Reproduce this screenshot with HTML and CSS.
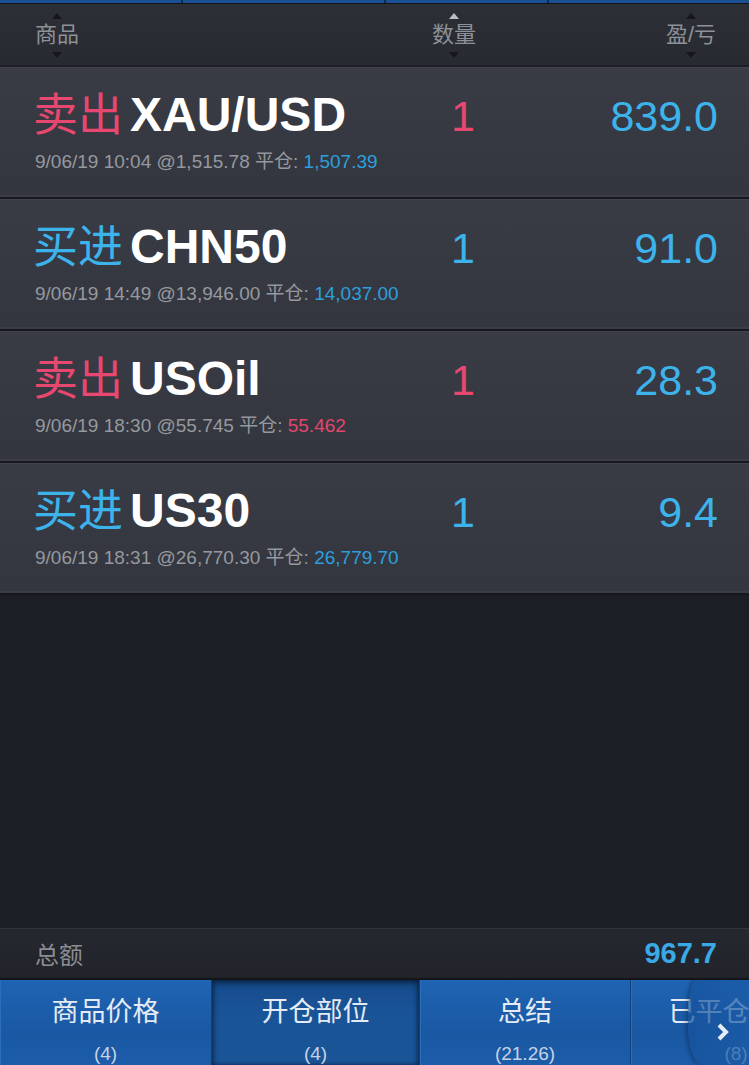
FILE: index.html
```html
<!DOCTYPE html>
<html>
<head>
	<meta charset="utf-8" />
	<title>开仓部位</title>
	<link rel="stylesheet" href="styles.css">
</head>
<body>
	<div class="app">
		<div class="topstrip">
			<span class="seg"></span><span class="seg"></span><span class="seg"></span><span class="seg"></span>
		</div>

		<div class="thead">
			<div class="hcell hleft">
				<i class="up"></i><span>商品</span><i class="down"></i>
			</div>
			<div class="hcell">
				<i class="up on"></i><span>数量</span><i class="down"></i>
			</div>
			<div class="hcell hright">
				<i class="up"></i><span>盈/亏</span><i class="down"></i>
			</div>
		</div>

		<div class="rows">
			<div class="row">
				<div class="sym">
					<div class="main"><span class="side sell">卖出</span><span class="code">XAU/USD</span></div>
					<div class="sub">9/06/19 10:04 @1,515.78 平仓: <span class="blue">1,507.39</span></div>
				</div>
				<div class="qty sell">1</div>
				<div class="pl">839.0</div>
			</div>
			<div class="row">
				<div class="sym">
					<div class="main"><span class="side buy">买进</span><span class="code">CHN50</span></div>
					<div class="sub">9/06/19 14:49 @13,946.00 平仓: <span class="blue">14,037.00</span></div>
				</div>
				<div class="qty buy">1</div>
				<div class="pl">91.0</div>
			</div>
			<div class="row">
				<div class="sym">
					<div class="main"><span class="side sell">卖出</span><span class="code">USOil</span></div>
					<div class="sub">9/06/19 18:30 @55.745 平仓: <span class="red">55.462</span></div>
				</div>
				<div class="qty sell">1</div>
				<div class="pl">28.3</div>
			</div>
			<div class="row">
				<div class="sym">
					<div class="main"><span class="side buy">买进</span><span class="code">US30</span></div>
					<div class="sub">9/06/19 18:31 @26,770.30 平仓: <span class="blue">26,779.70</span></div>
				</div>
				<div class="qty buy">1</div>
				<div class="pl">9.4</div>
			</div>
		</div>

		<div class="spacer"></div>

		<div class="total">
			<span class="total-label">总额</span>
			<span class="total-value">967.7</span>
		</div>

		<div class="tabs">
			<div class="tab t1"><div class="tab-name">商品价格</div><div class="tab-count">(4)</div></div>
			<div class="tab t2 active"><div class="tab-name">开仓部位</div><div class="tab-count">(4)</div></div>
			<div class="tab t3"><div class="tab-name">总结</div><div class="tab-count">(21.26)</div></div>
			<div class="tab t4"><div class="tab-name">已平仓部位</div><div class="tab-count">(8)</div></div>
			<div class="more">
				<svg width="14" height="20" viewBox="0 0 14 20"><path d="M3 3 L10 10 L3 17" fill="none" stroke="#e6edf6" stroke-width="4" stroke-linejoin="miter"/></svg>
			</div>
		</div>
	</div>
</body>
</html>
```

FILE: styles.css
```css
body{
	margin: 0;
	background-color: #1b1e25;
	font-family: "Liberation Sans", "Noto Sans CJK SC", sans-serif;
}

.app{
	width: 749px;
	height: 1065px;
	display: flex;
	flex-direction: column;
	overflow: hidden;
}

/* bottom edge of the bar above */
.topstrip{
	height: 3px;
	display: flex;
	background-color: #0d2a55;
	border-bottom: 1px solid #121419;
}
.topstrip .seg{
	height: 3px;
	background: #1a4f94;
	margin-right: 2px;
}
.topstrip .seg:nth-child(1){ width: 181px; }
.topstrip .seg:nth-child(2){ width: 201px; }
.topstrip .seg:nth-child(3){ width: 161px; }
.topstrip .seg:nth-child(4){ flex: 1; margin-right: 0; }

/* column header */
.thead{
	height: 61px;
	display: grid;
	grid-template-columns: 362px 114px 1fr;
	padding: 0 33px 0 35px;
	background: linear-gradient(#2c2f36, #282a31);
	border-bottom: 2px solid #1d1f25;
}
.hcell{
	display: flex;
	flex-direction: column;
	align-items: center;
	justify-self: center;
	padding-top: 9px;
	color: #8e9198;
	font-size: 22px;
	line-height: 26px;
}
.hleft{ justify-self: start; }
.hright{ justify-self: end; }
.hcell .up, .hcell .down{
	width: 0;
	height: 0;
	border-left: 5px solid transparent;
	border-right: 5px solid transparent;
}
.hcell .up{
	border-bottom: 6px solid #15171b;
	margin-bottom: 3px;
}
.hcell .up.on{
	border-bottom-color: #b9bcc2;
}
.hcell .down{
	border-top: 6px solid #15171b;
	margin-top: 4px;
}

/* position rows */
.row{
	height: 130px;
	display: grid;
	grid-template-columns: 388px 80px 1fr;
	align-items: start;
	padding: 0 31px 0 35px;
	background: linear-gradient(#393c45, #33363e);
	box-shadow: inset 0 1px 0 #41444d, inset 0 -2px 0 #3a3d46;
	border-bottom: 2px solid #16181d;
}
.sym{
	padding-top: 25px;
}
.main{
	line-height: 46px;
	white-space: nowrap;
}
.side{
	font-size: 45px;
	margin-left: -2px;
}
.sell{ color: #e8476f; }
.buy{ color: #3db3ec; }
.code{
	font-size: 48px;
	font-weight: bold;
	color: #ffffff;
	margin-left: 7px;
}
.sub{
	margin-top: 2px;
	font-size: 19px;
	line-height: 22px;
	color: #96999f;
	white-space: nowrap;
}
.sub .blue{ color: #2d9fdc; }
.sub .red{ color: #e3466c; }

.qty, .pl{
	padding-top: 28px;
	font-size: 43px;
	line-height: 43px;
}
.qty{ text-align: center; }
.pl{
	text-align: right;
	color: #3db3ec;
}

.spacer{
	flex: 1;
	background-color: #1b1e25;
}

/* total bar */
.total{
	height: 49px;
	display: flex;
	align-items: center;
	justify-content: space-between;
	padding: 0 32px 0 35px;
	background: linear-gradient(#25282f, #212329);
	border-top: 1px solid #30333a;
}
.total-label{
	font-size: 24px;
	color: #8a8d93;
}
.total-value{
	font-size: 29px;
	font-weight: bold;
	color: #3aa9e6;
}

/* bottom tabs */
.tabs{
	position: relative;
	height: 85px;
	display: flex;
	border-top: 2px solid #121419;
	overflow: hidden;
	text-align: center;
	color: #e4ebf4;
}
.tab{
	flex: none;
	background: linear-gradient(#1f64b3, #1a58a3 60%, #1c5ca8);
	border-right: 1px solid #0f4078;
	box-shadow: inset 1px 0 0 #2a6fbd;
}
.t1{ width: 211px; }
.t2{ width: 207px; }
.t3{ width: 210px; }
.t4{ width: 210px; }
.tab.active{
	background: linear-gradient(#154b8c, #1a5498 40%, #1a5598);
	box-shadow: inset 0 4px 6px rgba(0, 0, 0, 0.35), inset 2px 0 4px rgba(0, 0, 0, 0.3), inset -2px 0 4px rgba(0, 0, 0, 0.3);
}
.tab-name{
	padding-top: 16px;
	font-size: 27px;
	line-height: 32px;
	white-space: nowrap;
}
.tab-count{
	margin-top: 15px;
	font-size: 19px;
	line-height: 22px;
	color: #c6d3e4;
}
.more{
	position: absolute;
	top: 0;
	bottom: 0;
	left: 688px;
	right: 0;
	display: flex;
	align-items: center;
	justify-content: center;
	padding: 18px 0 0 8px;
	background: linear-gradient(90deg, rgba(22, 82, 156, 0.72), rgba(26, 90, 166, 0.7));
	border-radius: 8px 0 0 14px / 40px 0 0 40px;
	box-shadow: -2px 0 4px rgba(0, 0, 0, 0.3);
}
```
